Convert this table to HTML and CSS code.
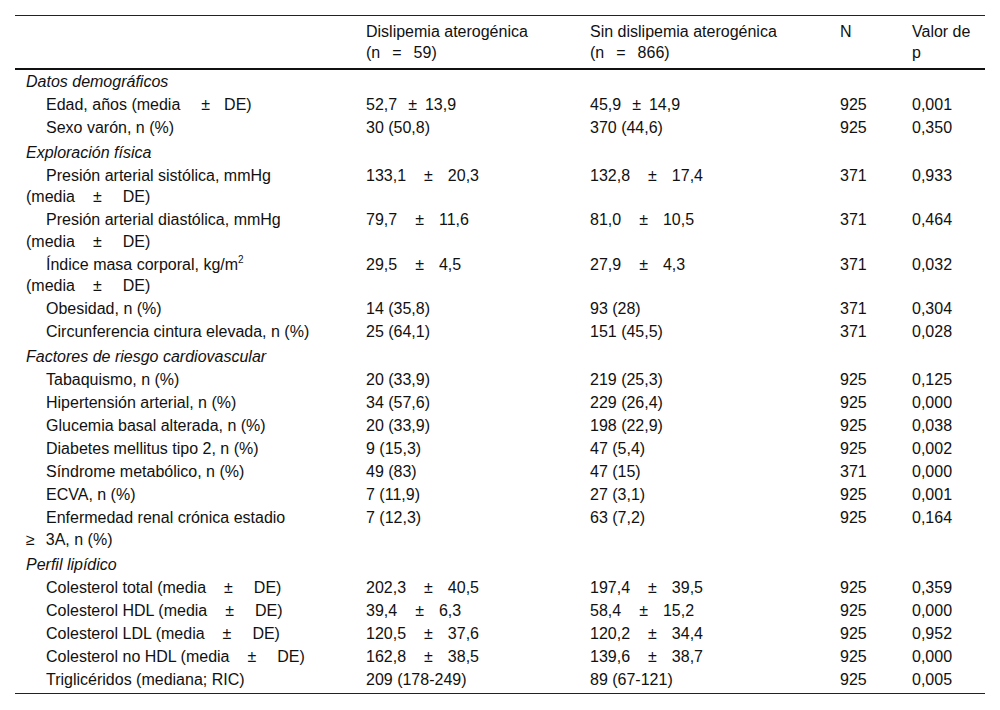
FILE: index.html
```html
<!DOCTYPE html>
<html lang="es">
<head>
<meta charset="utf-8">
<title>Tabla</title>
<link rel="stylesheet" href="styles.css">
</head>
<body>
<table class="t">
  <colgroup>
    <col class="c1"><col class="c2"><col class="c3"><col class="c4"><col class="c5">
  </colgroup>
  <thead>
    <tr>
      <th></th>
      <th>Dislipemia aterogénica<br>(n<span class="eq">=</span>59)</th>
      <th>Sin dislipemia aterogénica<br>(n<span class="eq">=</span>866)</th>
      <th>N</th>
      <th>Valor de p</th>
    </tr>
  </thead>
  <tbody>
    <tr class="cat"><td colspan="5">Datos demográficos</td></tr>
    <tr><td class="lbl">Edad, años (media<span class="lpm lpm-a">±</span>DE)</td><td>52,7<span class="pm pm-n">±</span>13,9</td><td>45,9<span class="pm pm-n">±</span>14,9</td><td>925</td><td>0,001</td></tr>
    <tr><td class="lbl">Sexo varón, n (%)</td><td>30 (50,8)</td><td>370 (44,6)</td><td>925</td><td>0,350</td></tr>

    <tr class="cat"><td colspan="5">Exploración física</td></tr>
    <tr><td class="lbl">Presión arterial sistólica, mmHg<br>(media<span class="lpm">±</span>DE)</td><td>133,1<span class="pm">±</span>20,3</td><td>132,8<span class="pm">±</span>17,4</td><td>371</td><td>0,933</td></tr>
    <tr><td class="lbl">Presión arterial diastólica, mmHg<br>(media<span class="lpm">±</span>DE)</td><td>79,7<span class="pm">±</span>11,6</td><td>81,0<span class="pm">±</span>10,5</td><td>371</td><td>0,464</td></tr>
    <tr><td class="lbl">Índice masa corporal, kg/m<sup>2</sup><br>(media<span class="lpm">±</span>DE)</td><td>29,5<span class="pm">±</span>4,5</td><td>27,9<span class="pm">±</span>4,3</td><td>371</td><td>0,032</td></tr>
    <tr><td class="lbl">Obesidad, n (%)</td><td>14 (35,8)</td><td>93 (28)</td><td>371</td><td>0,304</td></tr>
    <tr><td class="lbl">Circunferencia cintura elevada, n (%)</td><td>25 (64,1)</td><td>151 (45,5)</td><td>371</td><td>0,028</td></tr>

    <tr class="cat"><td colspan="5">Factores de riesgo cardiovascular</td></tr>
    <tr><td class="lbl">Tabaquismo, n (%)</td><td>20 (33,9)</td><td>219 (25,3)</td><td>925</td><td>0,125</td></tr>
    <tr><td class="lbl">Hipertensión arterial, n (%)</td><td>34 (57,6)</td><td>229 (26,4)</td><td>925</td><td>0,000</td></tr>
    <tr><td class="lbl">Glucemia basal alterada, n (%)</td><td>20 (33,9)</td><td>198 (22,9)</td><td>925</td><td>0,038</td></tr>
    <tr><td class="lbl">Diabetes mellitus tipo 2, n (%)</td><td>9 (15,3)</td><td>47 (5,4)</td><td>925</td><td>0,002</td></tr>
    <tr><td class="lbl">Síndrome metabólico, n (%)</td><td>49 (83)</td><td>47 (15)</td><td>371</td><td>0,000</td></tr>
    <tr><td class="lbl">ECVA, n (%)</td><td>7 (11,9)</td><td>27 (3,1)</td><td>925</td><td>0,001</td></tr>
    <tr><td class="lbl">Enfermedad renal crónica estadio<br><span class="ge">≥</span>3A, n (%)</td><td>7 (12,3)</td><td>63 (7,2)</td><td>925</td><td>0,164</td></tr>

    <tr class="cat"><td colspan="5">Perfil lipídico</td></tr>
    <tr><td class="lbl">Colesterol total (media<span class="lpm">±</span>DE)</td><td>202,3<span class="pm">±</span>40,5</td><td>197,4<span class="pm">±</span>39,5</td><td>925</td><td>0,359</td></tr>
    <tr><td class="lbl">Colesterol HDL (media<span class="lpm">±</span>DE)</td><td>39,4<span class="pm">±</span>6,3</td><td>58,4<span class="pm">±</span>15,2</td><td>925</td><td>0,000</td></tr>
    <tr><td class="lbl">Colesterol LDL (media<span class="lpm">±</span>DE)</td><td>120,5<span class="pm">±</span>37,6</td><td>120,2<span class="pm">±</span>34,4</td><td>925</td><td>0,952</td></tr>
    <tr><td class="lbl">Colesterol no HDL (media<span class="lpm">±</span>DE)</td><td>162,8<span class="pm">±</span>38,5</td><td>139,6<span class="pm">±</span>38,7</td><td>925</td><td>0,000</td></tr>
    <tr><td class="lbl">Triglicéridos (mediana; RIC)</td><td>209 (178-249)</td><td>89 (67-121)</td><td>925</td><td>0,005</td></tr>
  </tbody>
</table>
</body>
</html>
```

FILE: styles.css
```css
html, body {
  margin: 0;
  padding: 0;
  background: #ffffff;
}

body {
  padding: 15px;
  font-family: "Liberation Sans", Arial, sans-serif;
  font-size: 16px;
  color: #111111;
}

.t {
  width: 970px;
  border-collapse: collapse;
  table-layout: fixed;
  border-top: 1px solid #222;
  border-bottom: 1px solid #222;
}

.c1 { width: 340px; }
.c2 { width: 224px; }
.c3 { width: 250px; }
.c4 { width: 72px; }
.c5 { width: 84px; }

.t th {
  font-weight: normal;
  text-align: left;
  vertical-align: top;
  line-height: 21px;
  padding: 5px 6px 5px 11px;
  border-bottom: 2px solid #111;
}

.t td {
  text-align: left;
  vertical-align: top;
  line-height: 21.5px;
  padding: 0.75px 8px 0.75px 11px;
  white-space: nowrap;
}

.t .cat td {
  font-style: italic;
  padding-top: 2.75px;
}

.t tbody .cat:first-child td {
  padding-top: 0.75px;
}

.t tbody tr:last-child td {
  padding-bottom: 3px;
}

.t td.lbl {
  text-indent: 20px;
}

.eq {
  margin: 0 12px 0 12px;
}

.pm {
  margin: 0 15px 0 18px;
}

.pm-n {
  margin: 0 8px 0 11px;
}

.lpm {
  margin: 0 21px 0 18px;
}

.lpm-a {
  margin: 0 14px 0 21px;
}

.ge {
  margin-right: 11px;
}

sup {
  font-size: 10px;
  line-height: 0;
  vertical-align: 7px;
}
```
